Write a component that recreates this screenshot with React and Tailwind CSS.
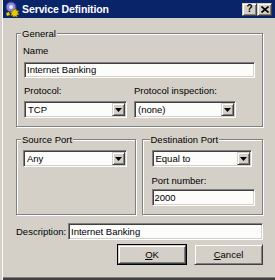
import React from "react";

const sunken =
  "bg-[#fcfcfa] border border-[#808080] border-b-white border-r-white shadow-[inset_1px_1px_0_#404040,inset_-1px_-1px_0_#d4d0c8]";
const raised =
  "bg-[#d4d0c8] border border-[#d4d0c8] border-b-[#404040] border-r-[#404040] shadow-[inset_1px_1px_0_#ffffff,inset_-1px_-1px_0_#808080]";

function Arrow() {
  return (
    <div className={`${raised} w-[13px] my-[1px] mr-[1px] flex items-center justify-center`}>
      <svg width="7" height="4" viewBox="0 0 7 4">
        <path d="M0 0H7L3.5 4Z" fill="#000" />
      </svg>
    </div>
  );
}

function Combo({ value, className = "" }) {
  return (
    <div className={`${sunken} h-[17px] flex ${className}`}>
      <div className="flex-1 pl-[3px] flex items-center overflow-hidden whitespace-nowrap">{value}</div>
      <Arrow />
    </div>
  );
}

function Field({ value, className = "" }) {
  return (
    <div className={`${sunken} flex items-center pl-[2px] whitespace-nowrap overflow-hidden ${className}`}>
      {value}
    </div>
  );
}

function Group({ label, labelLeft = "left-[4px]", className = "", children }) {
  return (
    <div
      className={`relative border border-[#808080] shadow-[1px_1px_0_#ffffff,inset_1px_1px_0_#ffffff] ${className}`}
    >
      <div className={`absolute top-[-6px] ${labelLeft} px-[1px] bg-[#d4d0c8] leading-[11px]`}>{label}</div>
      {children}
    </div>
  );
}

export default function App() {
  return (
    <div className="w-[275px] h-[280px] bg-[#d4d0c8] flex flex-col text-black text-[9.5px] leading-[12px] font-['Liberation_Sans',Arial,sans-serif] shadow-[inset_2px_0_0_#d4d0c8,inset_3px_0_0_#ffffff,inset_0_-2px_0_#404040,inset_0_-3px_0_#808080]">
      {/* Title bar */}
      <div className="ml-[3px] h-[18px] shrink-0 bg-[#0a246a] flex items-center">
        <svg width="16" height="16" viewBox="0 0 16 16" className="ml-[1px]">
          <circle cx="7" cy="6" r="5" fill="#8a8ad8" stroke="#3a3a8a" strokeWidth="1" />
          <circle cx="7" cy="6" r="2" fill="#e8e8ff" />
          <g fill="#e8c800" stroke="#806a00" strokeWidth="0.6">
            <path d="M10 8.5l1 0.2 0.5-1 1 0.5-0.2 1.1 0.9 0.7 1-0.5 0.5 1-0.9 0.7 0.1 1.1 1 0.4-0.4 1.1-1.1-0.1-0.6 0.9 0.5 1-1 0.5-0.7-0.9-1.1 0.1-0.4 1-1.1-0.4 0.1-1.1-0.9-0.6-1 0.5-0.5-1 0.9-0.7-0.1-1.1-1-0.4 0.4-1.1 1.1 0.1z" />
          </g>
          <path d="M2 12l3-1 1 3-3 1z" fill="#e8c800" />
        </svg>
        <div className="ml-[2px] text-white font-bold text-[10.5px] leading-[12px] tracking-[-0.1px]">Service Definition</div>
        <div className="ml-auto mr-[3px] flex">
          <div className={`${raised} w-[15px] h-[13px] flex items-center justify-center font-bold text-[10px] leading-[10px]`}>?</div>
          <div className={`${raised} w-[15px] h-[13px] flex items-center justify-center`}>
            <svg width="8" height="7" viewBox="0 0 8 7">
              <path d="M0.5 0.5L7.5 6.5M7.5 0.5L0.5 6.5" stroke="#000" strokeWidth="1.6" />
            </svg>
          </div>
        </div>
      </div>

      <div className="flex flex-col pl-[16px] pr-[12px]">
        {/* General */}
        <Group label="General" className="mt-[15px] h-[94px]">
          <div className="flex flex-col pl-[6px]">
            <div className="mt-[11px] h-[12px]">Name</div>
            <Field value="Internet Banking" className="mt-[5px] ml-[1px] w-[231px] h-[16px]" />
            <div className="mt-[7px] flex gap-[7px] ml-[1px]">
              <div className="flex flex-col w-[103px]">
                <div className="h-[12px]">Protocol:</div>
                <Combo value="TCP" className="mt-[4px]" />
              </div>
              <div className="flex flex-col w-[102px]">
                <div className="h-[12px]">Protocol inspection:</div>
                <Combo value="(none)" className="mt-[4px]" />
              </div>
            </div>
          </div>
        </Group>

        {/* Ports */}
        <div className="mt-[12px] flex gap-[6px] h-[76px]">
          <Group label="Source Port" className="w-[120px] h-[76px]">
            <div className="flex flex-col pl-[6px]">
              <Combo value="Any" className="mt-[10px] w-[104px]" />
            </div>
          </Group>
          <Group label="Destination Port" labelLeft="left-[7px]" className="w-[122px] h-[76px]">
            <div className="flex flex-col pl-[9px]">
              <Combo value="Equal to" className="mt-[10px] w-[100px]" />
              <div className="mt-[8px] h-[12px]">Port number:</div>
              <Field value="2000" className="mt-[2px] w-[103px] h-[17px]" />
            </div>
          </Group>
        </div>

        {/* Description */}
        <div className="mt-[8px] flex items-center">
          <div className="w-[52px]">Description:</div>
          <Field value="Internet Banking" className="flex-1 h-[17px]" />
        </div>

        {/* Buttons */}
        <div className="mt-[4px] flex justify-end gap-[7px]">
          <div className="w-[70px] h-[21px] border border-black">
            <div className={`${raised} w-full h-full flex items-center justify-center`}>
              <span><span className="underline">O</span>K</span>
            </div>
          </div>
          <div className={`${raised} w-[69px] h-[21px] flex items-center justify-center`}>
            <span><span className="underline">C</span>ancel</span>
          </div>
        </div>
      </div>
    </div>
  );
}
